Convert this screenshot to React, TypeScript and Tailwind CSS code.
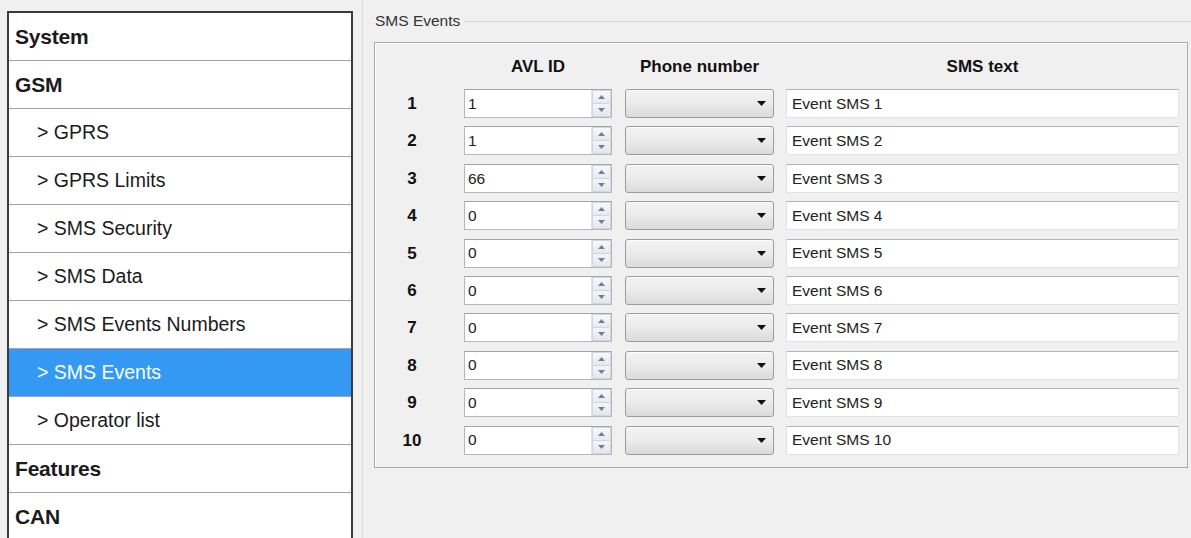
import React from "react";

type NavItem = { label: string; level: 0 | 1; selected?: boolean };

const navItems: NavItem[] = [
  { label: "System", level: 0 },
  { label: "GSM", level: 0 },
  { label: "> GPRS", level: 1 },
  { label: "> GPRS Limits", level: 1 },
  { label: "> SMS Security", level: 1 },
  { label: "> SMS Data", level: 1 },
  { label: "> SMS Events Numbers", level: 1 },
  { label: "> SMS Events", level: 1, selected: true },
  { label: "> Operator list", level: 1 },
  { label: "Features", level: 0 },
  { label: "CAN", level: 0 },
];

const events = [
  { n: 1, avl: "1" },
  { n: 2, avl: "1" },
  { n: 3, avl: "66" },
  { n: 4, avl: "0" },
  { n: 5, avl: "0" },
  { n: 6, avl: "0" },
  { n: 7, avl: "0" },
  { n: 8, avl: "0" },
  { n: 9, avl: "0" },
  { n: 10, avl: "0" },
];

function NavRow({ item }: { item: NavItem }) {
  const base =
    "h-[48px] shrink-0 flex items-center border-b border-[#a3a3a3]";
  const tone = item.selected
    ? "bg-[#3399f3] text-white"
    : "bg-white text-[#1b1b1b]";
  const text =
    item.level === 0
      ? "pl-[6px] text-[21px] font-bold tracking-[-0.2px]"
      : "pl-[28px] text-[19.5px]";
  return <div className={`${base} ${tone} ${text}`}>{item.label}</div>;
}

function SpinBox({ value }: { value: string }) {
  return (
    <div className="w-[148px] h-[29px] flex bg-white border border-[#b5b7bd] border-t-[#a2a4aa]">
      <div className="flex-1 pl-[3px] flex items-center text-[15.5px] text-[#222] leading-none">
        {value}
      </div>
      <div className="w-[20px] flex flex-col border-l border-[#dfe3ea] bg-[#f7f8fa]">
        <div className="flex-1 flex items-center justify-center border border-[#d2d7df] bg-gradient-to-b from-[#f8f9fb] to-[#e6e9ee]">
          <svg width="7" height="4" viewBox="0 0 7 4">
            <path d="M0 4 L3.5 0 L7 4 Z" fill="#6d7f9c" />
          </svg>
        </div>
        <div className="flex-1 flex items-center justify-center border border-t-0 border-[#d2d7df] bg-gradient-to-b from-[#f3f5f8] to-[#e4e7ec]">
          <svg width="7" height="4" viewBox="0 0 7 4">
            <path d="M0 0 L7 0 L3.5 4 Z" fill="#6d7f9c" />
          </svg>
        </div>
      </div>
    </div>
  );
}

function ComboBox() {
  return (
    <div className="ml-[13px] w-[149px] h-[29px] rounded-[3px] border border-[#9c9c9c] bg-gradient-to-b from-[#f3f3f3] via-[#ebebeb] to-[#dadada] shadow-[inset_0_1px_0_#ffffff] flex items-center justify-end pr-[7px]">
      <svg width="9" height="5" viewBox="0 0 9 5">
        <path d="M0 0 L9 0 L4.5 5 Z" fill="#111" />
      </svg>
    </div>
  );
}

function TextField({ value }: { value: string }) {
  return (
    <div className="ml-[12px] w-[393px] h-[29px] bg-white border border-[#e0e3e9] border-t-[#b3b5bb] flex items-center pl-[5px] text-[15.5px] text-[#222] leading-none">
      {value}
    </div>
  );
}

export default function App() {
  return (
    <div className="w-[1191px] h-[538px] overflow-hidden bg-[#f0f0f0] flex font-['Liberation_Sans',Arial,sans-serif]">
      {/* settings navigation */}
      <div className="ml-[7px] mt-[11px] w-[346px] shrink-0 self-start border-2 border-b-0 border-[#3b3b3b] bg-white flex flex-col">
        {navItems.map((item) => (
          <NavRow key={item.label} item={item} />
        ))}
      </div>

      {/* SMS Events group */}
      <div className="ml-[9px] flex-1 flex flex-col border-l border-[#dcdcdc]">
        <div className="mt-[12px] h-[18px] flex items-center">
          <span className="pl-[12px] pr-[4px] text-[15.5px] text-[#333] leading-none">
            SMS Events
          </span>
          <div className="flex-1 border-t border-[#d6d6d6]" />
        </div>

        <div className="mt-[12px] ml-[11px] mr-[3px] h-[426px] border border-[#a9a9a9] shadow-[inset_1px_1px_0_#ffffff] flex flex-col">
          <div className="h-[46px] shrink-0 flex items-center text-[17px] font-bold text-[#111] leading-none">
            <div className="w-[89px]" />
            <div className="w-[148px] text-center">AVL ID</div>
            <div className="ml-[13px] w-[149px] text-center">Phone number</div>
            <div className="ml-[12px] w-[393px] text-center">SMS text</div>
          </div>
          <div className="flex flex-col gap-[8.4px]">
            {events.map((e) => (
              <div key={e.n} className="h-[29px] flex items-center">
                <div className="w-[89px] pl-[23px] text-[17px] font-bold text-[#111] leading-none">
                  <span className="inline-block w-[28px] text-center">{e.n}</span>
                </div>
                <SpinBox value={e.avl} />
                <ComboBox />
                <TextField value={`Event SMS ${e.n}`} />
              </div>
            ))}
          </div>
        </div>
      </div>
    </div>
  );
}
